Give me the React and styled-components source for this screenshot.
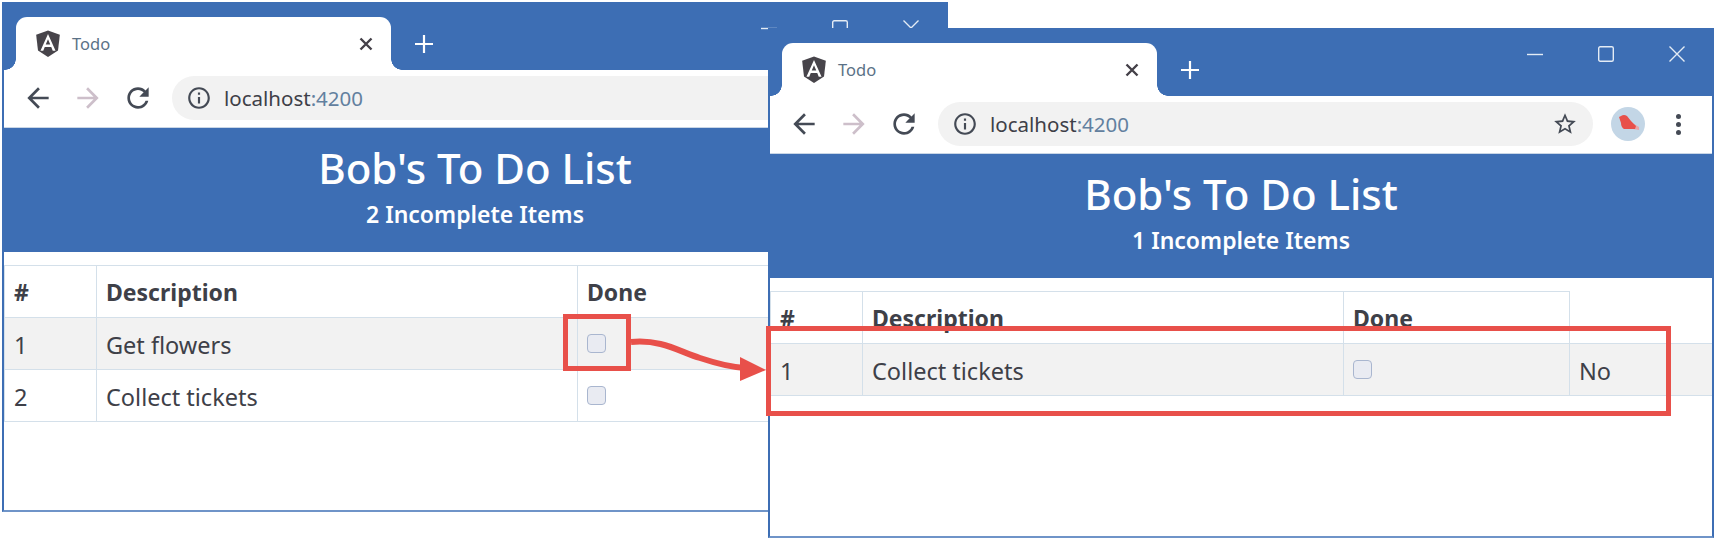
import React from 'react';
import styled, { createGlobalStyle } from 'styled-components';

const BLUE = '#3d6eb4';
const RED = '#e8504a';
const INK = '#3e4048';

const GlobalStyle = createGlobalStyle`
  html, body { margin: 0; padding: 0; background: #fff; }
  body { font-family: 'Noto Sans', 'Open Sans', sans-serif; color: ${INK}; }
`;

const Desktop = styled.div`
  position: relative;
  width: 1716px;
  height: 541px;
  overflow: hidden;
  background: #fff;
`;

const Frame = styled.section`
  position: absolute;
  left: ${(p) => p.$left}px;
  top: ${(p) => p.$top}px;
  width: 946px;
  height: 510px;
  box-sizing: border-box;
  display: flex;
  flex-direction: column;
  background: #fff;
  border: 2px solid ${BLUE};
  border-top: 0;
  border-bottom-color: #6f94c8;
`;

const TitleBar = styled.div`
  display: flex;
  align-items: flex-start;
  height: 68px;
  flex: none;
  padding: 15px 0 0 12px;
  box-sizing: border-box;
  background: ${BLUE};
`;

const Tab = styled.div`
  position: relative;
  display: flex;
  align-items: center;
  width: 375px;
  height: 53px;
  box-sizing: border-box;
  padding: 0 18px 0 19px;
  background: #fff;
  border-radius: 11px 11px 0 0;
  color: #5b7186;
  font-size: 16.5px;

  &::before, &::after {
    content: '';
    position: absolute;
    bottom: 0;
    width: 11px;
    height: 11px;
  }
  &::before {
    left: -11px;
    background: radial-gradient(circle at 0 0, transparent 10.5px, #fff 11px);
  }
  &::after {
    right: -11px;
    background: radial-gradient(circle at 100% 0, transparent 10.5px, #fff 11px);
  }
`;

const TabLabel = styled.span`
  margin-left: 11px;
  flex: 1;
`;

const NewTab = styled.div`
  display: flex;
  margin: 18px 0 0 24px;
`;

const WindowControls = styled.div`
  display: flex;
  gap: 55px;
  margin: 3px 0 0 auto;
  padding-right: 27px;
`;

const Toolbar = styled.div`
  display: flex;
  align-items: center;
  height: 58px;
  flex: none;
  box-sizing: border-box;
  padding: 0 0 1px 18px;
  background: #fff;
  border-bottom: 1px solid #c9d6e6;
`;

const NavButtons = styled.div`
  display: flex;
  align-items: center;
  gap: 18px;
`;

const Omnibox = styled.div`
  display: flex;
  align-items: center;
  width: 655px;
  height: 44px;
  margin-left: 18px;
  padding: 0 15px 0 14px;
  box-sizing: border-box;
  border-radius: 22px;
  background: #f2f2f2;
  font-size: 20.5px;
  color: ${INK};
`;

const Address = styled.span`
  margin-left: 12px;
  flex: 1;
`;

const Port = styled.span`
  color: #62809f;
`;

const Avatar = styled.div`
  display: flex;
  align-items: center;
  justify-content: center;
  width: 34px;
  height: 34px;
  margin-left: 18px;
  border-radius: 50%;
  background: #c3d6e6;
`;

const MoreDots = styled.div`
  display: flex;
  flex-direction: column;
  gap: 3px;
  margin-left: 31px;

  span {
    width: 5px;
    height: 5px;
    border-radius: 50%;
    background: #444a55;
  }
`;

const Banner = styled.header`
  height: 124px;
  flex: none;
  box-sizing: border-box;
  padding-top: 12px;
  background: ${BLUE};
  color: #fff;
  text-align: center;
`;

const Heading = styled.h1`
  margin: 0;
  font-size: 42px;
  line-height: 56px;
  font-weight: 500;
`;

const SubHeading = styled.h2`
  margin: 3px 0 0;
  font-size: 23px;
  line-height: 30px;
  font-weight: 600;
`;

const TodoTable = styled.table`
  width: 100%;
  margin-top: 13px;
  table-layout: fixed;
  border-collapse: collapse;
  font-size: 23.5px;
  color: ${INK};
`;

const HeadCell = styled.th`
  height: 52px;
  box-sizing: border-box;
  padding: 0 9px;
  text-align: left;
  font-weight: 700;
  font-size: 23px;
  border: 1px solid #d4e0ea;
`;

const Row = styled.tr`
  background: ${(p) => (p.$striped ? '#f2f2f2' : '#fff')};
`;

const Cell = styled.td`
  height: 52px;
  box-sizing: border-box;
  padding: 3px 9px 0;
  border: 1px solid #d4e0ea;
  vertical-align: middle;
  border-right-width: ${(p) => (p.$last ? 0 : 1)}px;
`;

const Check = styled.div`
  width: 19px;
  height: 19px;
  margin-top: -3px;
  box-sizing: border-box;
  border: 1.5px solid #a9b6cf;
  border-radius: 4px;
  background: #e9ebf2;
`;

const RedBox = styled.div`
  position: absolute;
  left: ${(p) => p.$left}px;
  top: ${(p) => p.$top}px;
  width: ${(p) => p.$width}px;
  height: ${(p) => p.$height}px;
  box-sizing: border-box;
  border: 5px solid ${RED};
`;

const ArrowLayer = styled.svg`
  position: absolute;
  left: 0;
  top: 0;
`;

const Icon = ({ d, size = 24, color = '#444a55' }) => (
  <svg width={size} height={size} viewBox="0 0 24 24" fill={color}>
    <path d={d} />
  </svg>
);

const BACK = 'M20 11H7.83l5.59-5.59L12 4l-8 8 8 8 1.41-1.41L7.83 13H20v-2z';
const FORWARD = 'M12 4l-1.41 1.41L16.17 11H4v2h12.17l-5.58 5.59L12 20l8-8z';
const RELOAD = 'M17.65 6.35C16.2 4.9 14.21 4 12 4c-4.42 0-7.99 3.58-7.99 8s3.57 8 7.99 8c3.73 0 6.84-2.55 7.73-6h-2.08c-.82 2.33-3.04 4-5.65 4-3.31 0-6-2.69-6-6s2.69-6 6-6c1.66 0 3.14.69 4.22 1.78L13 11h7V4l-2.35 2.35z';
const INFO = 'M11 7h2v2h-2zm0 4h2v6h-2zm1-9C6.48 2 2 6.48 2 12s4.48 10 10 10 10-4.48 10-10S17.52 2 12 2zm0 18c-4.41 0-8-3.59-8-8s3.59-8 8-8 8 3.59 8 8-3.59 8-8 8z';
const STAR = 'M22 9.24l-7.19-.62L12 2 9.19 8.63 2 9.24l5.46 4.73L5.82 21 12 17.27 18.18 21l-1.63-7.03L22 9.24zM12 15.4l-3.76 2.27 1-4.28-3.32-2.88 4.38-.38L12 6.1l1.71 4.04 4.38.38-3.32 2.88 1 4.28L12 15.4z';

const AngularLogo = () => (
  <svg width="26" height="28" viewBox="0 0 24 26">
    <path d="M12 0.5 L1 4.4 l1.7 14.6 L12 25 l9.3-6 L23 4.4z" fill="#47444a" />
    <path fillRule="evenodd" fill="#fff" d="M12 3.6 L5 19.2 h2.6 l1.4-3.5 h6 l1.4 3.5 H19 L12 3.6z M14.1 13.4 h-4.2 L12 8.6z" />
  </svg>
);

const Bird = () => (
  <svg width="28" height="20" viewBox="0 0 28 20">
    <path fill="#eaa6a6" d="M20 10 L25 13 L25 16 L19 15z" />
    <path fill={RED} d="M7 2 Q10 0 13 2 L17 7 L22 12 L21 15 H10 Q7 13 7 9 L5 3z" />
  </svg>
);

const TabClose = () => (
  <svg width="14" height="14" viewBox="0 0 14 14" stroke="#444048" strokeWidth="2.4">
    <path d="M1.5 1.5 L12.5 12.5 M12.5 1.5 L1.5 12.5" />
  </svg>
);

const Plus = () => (
  <svg width="18" height="18" viewBox="0 0 18 18" stroke="#fff" strokeWidth="2.2">
    <path d="M9 0 V18 M0 9 H18" />
  </svg>
);

const WinControl = ({ children }) => (
  <svg width="16" height="16" viewBox="0 0 16 16" fill="none" stroke="#e4ecf5" strokeWidth="1.4">
    {children}
  </svg>
);

const BrowserWindow = ({ left, top, incomplete, items }) => (
  <Frame $left={left} $top={top}>
    <TitleBar>
      <Tab>
        <AngularLogo />
        <TabLabel>Todo</TabLabel>
        <TabClose />
      </Tab>
      <NewTab><Plus /></NewTab>
      <WindowControls>
        <WinControl><path d="M0 8.5 H16" /></WinControl>
        <WinControl><rect x="0.7" y="0.7" width="14.6" height="14.6" rx="1.5" /></WinControl>
        <WinControl><path d="M0.5 0.5 L15.5 15.5 M15.5 0.5 L0.5 15.5" /></WinControl>
      </WindowControls>
    </TitleBar>
    <Toolbar>
      <NavButtons>
        <Icon d={BACK} size={32} />
        <Icon d={FORWARD} size={32} color="#cdbfca" />
        <Icon d={RELOAD} size={32} />
      </NavButtons>
      <Omnibox>
        <Icon d={INFO} size={26} />
        <Address>localhost<Port>:4200</Port></Address>
        <Icon d={STAR} size={26} />
      </Omnibox>
      <Avatar><Bird /></Avatar>
      <MoreDots><span /><span /><span /></MoreDots>
    </Toolbar>
    <Banner>
      <Heading>Bob's To Do List</Heading>
      <SubHeading>{incomplete} Incomplete Items</SubHeading>
    </Banner>
    <TodoTable>
      <colgroup>
        <col width="92" />
        <col width="481" />
        <col width="226" />
        <col />
      </colgroup>
      <thead>
        <tr>
          <HeadCell>#</HeadCell>
          <HeadCell>Description</HeadCell>
          <HeadCell>Done</HeadCell>
        </tr>
      </thead>
      <tbody>
        {items.map((item, index) => (
          <Row key={item.name} $striped={index % 2 === 0}>
            <Cell>{index + 1}</Cell>
            <Cell>{item.name}</Cell>
            <Cell><Check /></Cell>
            <Cell $last>{item.done}</Cell>
          </Row>
        ))}
      </tbody>
    </TodoTable>
  </Frame>
);

const App = () => (
  <Desktop>
    <GlobalStyle />
    <BrowserWindow
      left={2}
      top={2}
      incomplete={2}
      items={[{ name: 'Get flowers', done: 'No' }, { name: 'Collect tickets', done: 'No' }]}
    />
    <BrowserWindow
      left={768}
      top={28}
      incomplete={1}
      items={[{ name: 'Collect tickets', done: 'No' }]}
    />
    <RedBox $left={563} $top={314} $width={68} $height={57} />
    <RedBox $left={766} $top={326} $width={905} $height={90} />
    <ArrowLayer width="1716" height="541" viewBox="0 0 1716 541" fill="none">
      <path d="M631 342 C 662 339, 680 352, 700 358 C 715 363, 728 367, 745 368" stroke={RED} strokeWidth="6" />
      <polygon points="740,357 766,370 740,381" fill={RED} />
    </ArrowLayer>
  </Desktop>
);

export default App;
